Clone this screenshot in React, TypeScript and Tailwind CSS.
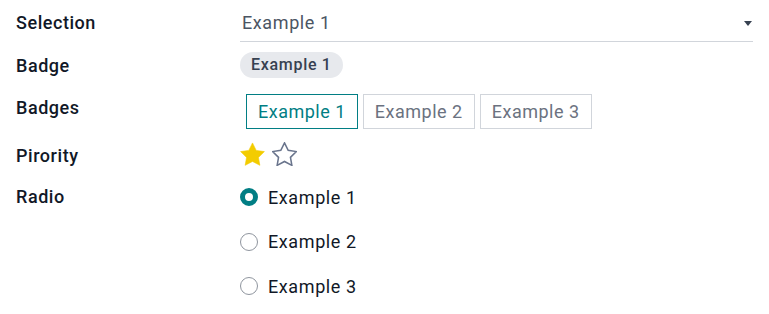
import React from "react";

const Star = ({ filled }: { filled: boolean }) => (
  <svg width="25" height="24" viewBox="1.5 1.5 21 20" className="block">
    <polygon
      points="12,2.2 15.09,8.46 22,9.47 17,14.34 18.18,21.02 12,17.77 5.82,21.02 7,14.34 2,9.47 8.91,8.46"
      fill={filled ? "#f3cc00" : "none"}
      stroke={filled ? "#f3cc00" : "#69748c"}
      strokeWidth={filled ? 0.5 : 1.3}
      strokeLinejoin="miter"
    />
  </svg>
);

const Radio = ({ checked, label }: { checked: boolean; label: string }) => (
  <div className="flex h-[44.5px] items-center">
    {checked ? (
      <span className="box-border block h-[18px] w-[18px] rounded-full border-[5.5px] border-[#017e84] bg-white" />
    ) : (
      <span className="box-border block h-[18px] w-[18px] rounded-full border border-[#8f959e] bg-white" />
    )}
    <span className="ml-[10px] text-[18px] tracking-[0.6px] text-[#111827]">{label}</span>
  </div>
);

export default function App() {
  return (
    <div className="bg-white pl-4 pr-4 pt-[5px] font-['Roboto',sans-serif] antialiased" style={{ minHeight: 314 }}>
      {/* Selection */}
      <div className="flex">
        <div className="h-[37px] w-[224px] shrink-0 text-[18px] font-medium leading-[36px] tracking-[0.55px] text-[#111827]">Selection</div>
        <div className="flex h-[37px] flex-1 items-center justify-between border-b border-[#d1d5db] pl-[2px]">
          <span className="text-[18px] leading-[36px] tracking-[0.6px] text-[#4b5563]">Example 1</span>
          <span className="mr-[1px] block h-0 w-0 border-l-[4.5px] border-r-[4.5px] border-t-[5px] border-l-transparent border-r-transparent border-t-[#374151]" />
        </div>
      </div>

      {/* Badge */}
      <div className="mt-[10px] flex">
        <div className="w-[224px] shrink-0 pt-[1px] text-[18px] font-medium leading-[26px] tracking-[0.55px] text-[#111827]">Badge</div>
        <div className="flex">
          <span className="h-[26px] rounded-full bg-[#e7e9ed] px-[11px] text-[16px] font-medium leading-[26px] tracking-[0.7px] text-[#374151]">Example 1</span>
        </div>
      </div>

      {/* Badges */}
      <div className="mt-[15px] flex">
        <div className="w-[224px] shrink-0 text-[18px] font-medium leading-[28px] tracking-[0.55px] text-[#111827]">Badges</div>
        <div className="ml-[6px] flex gap-[5px]">
          <span className="h-[35px] border border-[#017e84] px-[11px] text-[18px] leading-[33px] tracking-[0.5px] text-[#017e84]">Example 1</span>
          <span className="h-[35px] border border-[#d1d5db] px-[11px] text-[18px] leading-[33px] tracking-[0.5px] text-[#6b7280]">Example 2</span>
          <span className="h-[35px] border border-[#d1d5db] px-[11px] text-[18px] leading-[33px] tracking-[0.5px] text-[#6b7280]">Example 3</span>
        </div>
      </div>

      {/* Priority */}
      <div className="mt-[13px] flex">
        <div className="w-[224px] shrink-0 text-[18px] font-medium leading-[28px] tracking-[0.55px] text-[#111827]">Pirority</div>
        <div className="flex gap-[7px]">
          <Star filled />
          <Star filled={false} />
        </div>
      </div>

      {/* Radio */}
      <div className="mt-[5px] flex">
        <div className="w-[224px] shrink-0 text-[18px] font-medium leading-[44px] tracking-[0.55px] text-[#111827]">Radio</div>
        <div className="flex flex-col">
          <Radio checked label="Example 1" />
          <Radio checked={false} label="Example 2" />
          <Radio checked={false} label="Example 3" />
        </div>
      </div>
    </div>
  );
}
